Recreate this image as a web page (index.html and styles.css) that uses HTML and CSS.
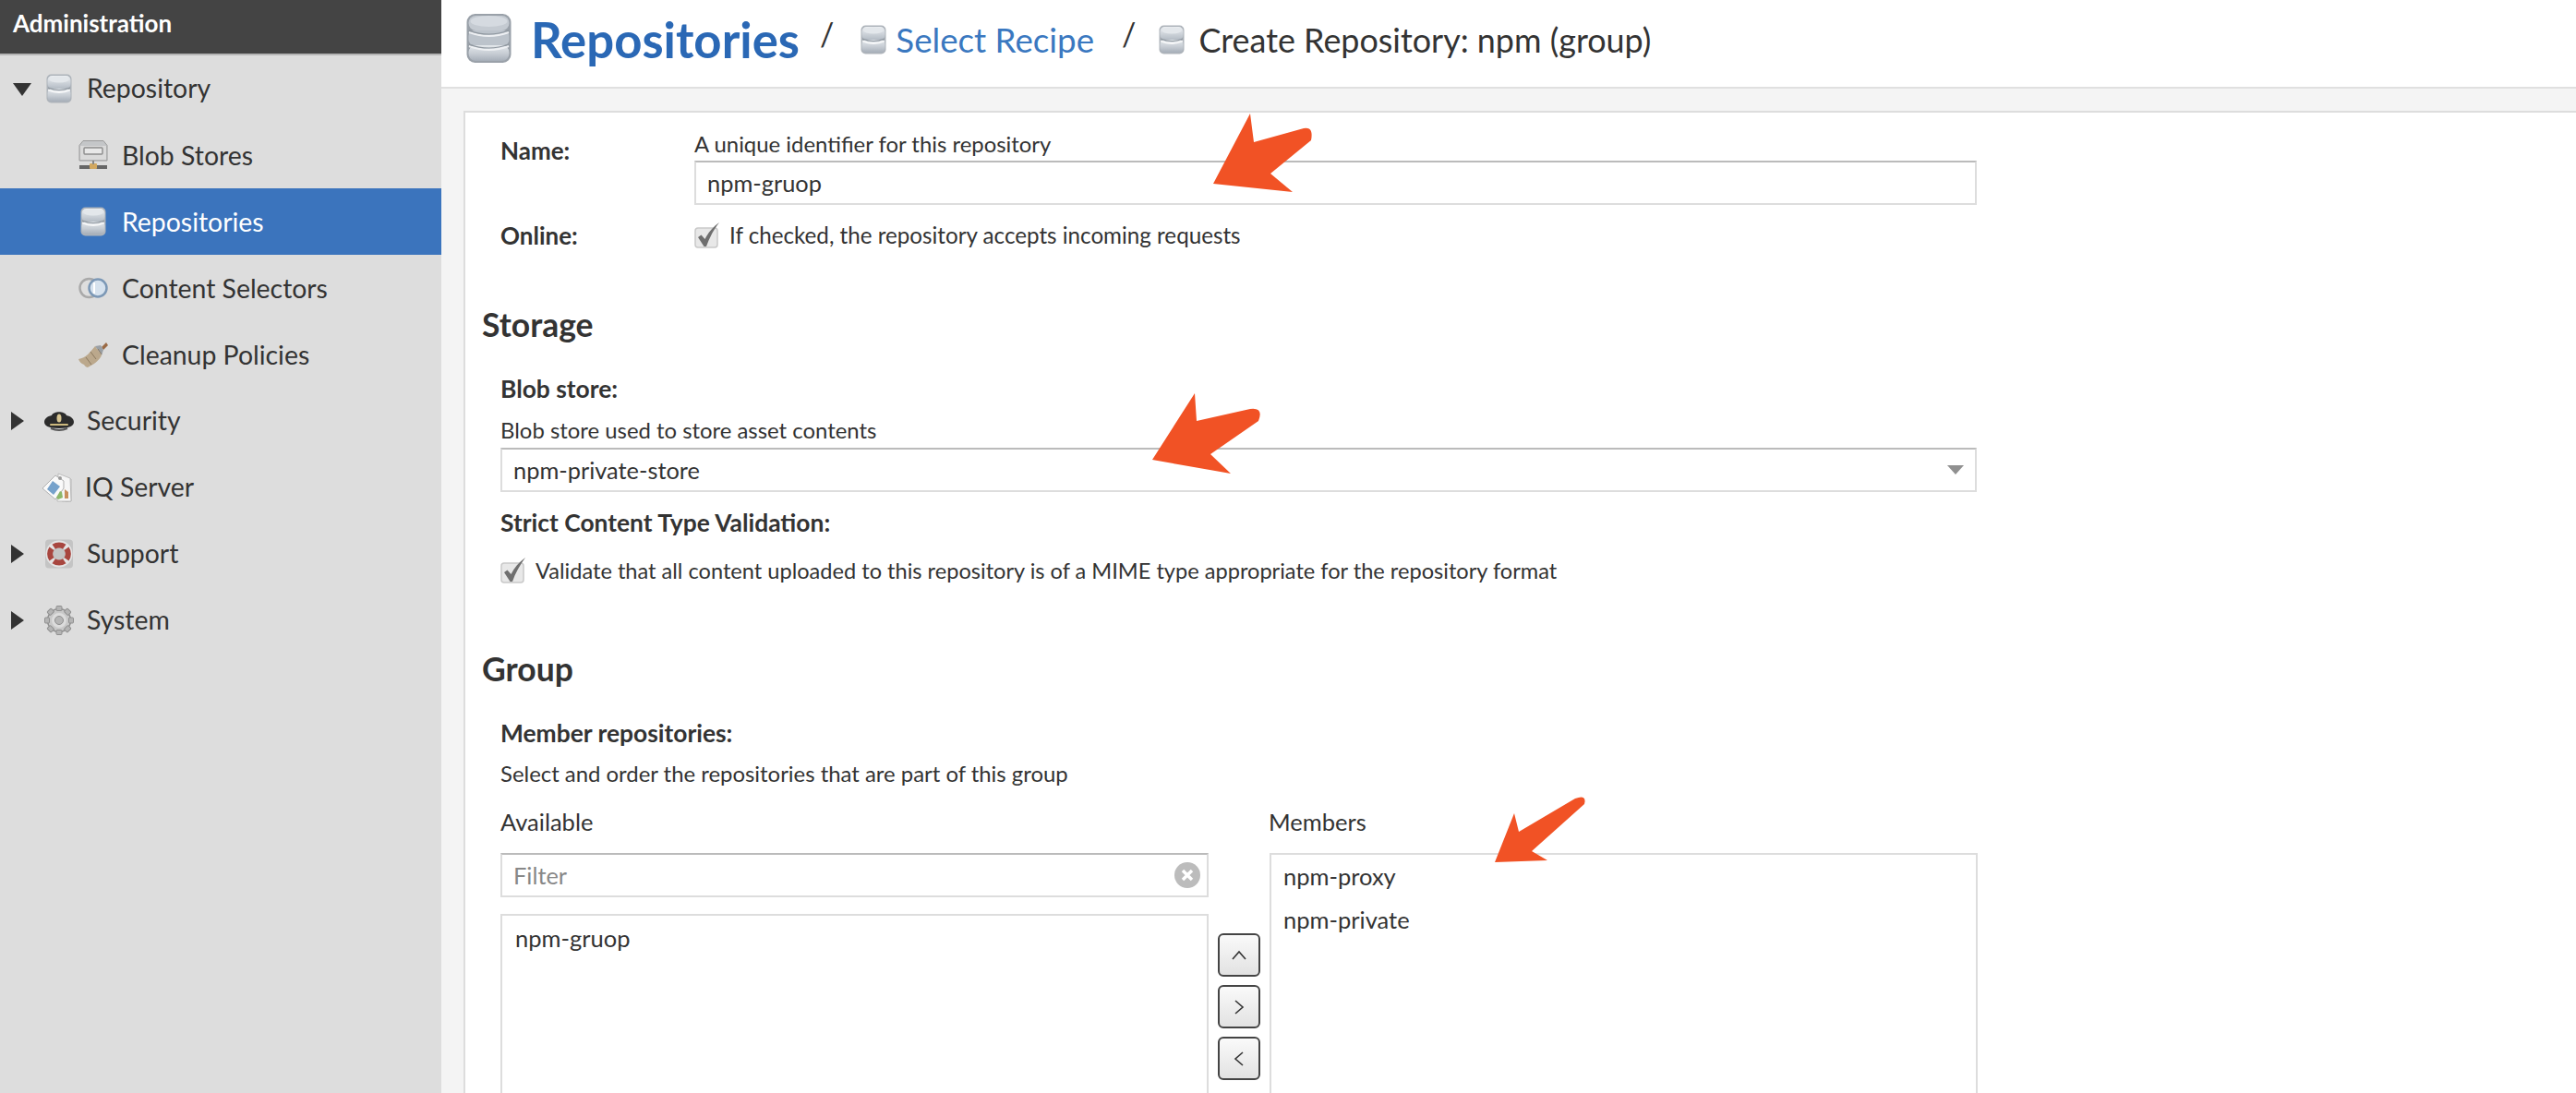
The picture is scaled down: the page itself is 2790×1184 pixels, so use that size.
FILE: index.html
```html
<!DOCTYPE html>
<html lang="en">
<head>
<meta charset="utf-8">
<title>Create Repository</title>
<link rel="stylesheet" href="styles.css">
</head>
<body>
<svg class="defs" width="0" height="0" aria-hidden="true">
  <defs>
    <linearGradient id="dbg" x1="0" y1="0" x2="0" y2="1"><stop offset="0" stop-color="#e4e8ec"/><stop offset="0.55" stop-color="#c6ccd3"/><stop offset="1" stop-color="#a6aeb8"/></linearGradient>
    <linearGradient id="dbl" x1="0" y1="0" x2="0" y2="1"><stop offset="0" stop-color="#eceff2"/><stop offset="1" stop-color="#b4bcc5"/></linearGradient>
    <symbol id="db2" viewBox="0 0 28 32">
      <rect x="0.5" y="0.5" width="27" height="31" rx="5" fill="#adb3ba"/>
      <rect x="1.5" y="2" width="25" height="14" rx="5" fill="url(#dbl)"/>
      <rect x="1.5" y="16" width="25" height="14" rx="5" fill="url(#dbg)"/>
      <ellipse cx="14" cy="6" rx="11" ry="3.4" fill="#e3e7eb"/>
      <path d="M2 17.500q12 5 24 0" fill="none" stroke="#f7f8f9" stroke-width="1.8"/>
      <path d="M2 15q12 5 24 0" fill="none" stroke="#8f979f" stroke-width="1.2"/>
    </symbol>
    <symbol id="db3" viewBox="0 0 49 56">
      <rect x="0.5" y="1" width="48" height="53" rx="9" fill="#9aa1a9"/>
      <rect x="2.5" y="3" width="44" height="16" rx="8" fill="#c4cad1"/>
      <rect x="2.5" y="19" width="44" height="16" rx="6" fill="#bcc3cb"/>
      <rect x="2.5" y="35" width="44" height="17" rx="8" fill="url(#dbg)"/>
      <ellipse cx="24.5" cy="9" rx="20" ry="6" fill="#d5dae0"/>
      <path d="M3 21q21.500 8 43 0M3 36q21.500 8 43 0" fill="none" stroke="#eef0f3" stroke-width="2"/>
      <path d="M3 19q21.500 8 43 0M3 34q21.500 8 43 0" fill="none" stroke="#8f979f" stroke-width="1.200"/>
    </symbol>
    <symbol id="blob" viewBox="0 0 32 32">
      <path d="M5 0.500h22l4 5v16.500h-30v-16.500z" fill="#c4c6c8" stroke="#999" stroke-width="1"/>
      <rect x="2" y="6" width="28" height="15" fill="#dadada"/>
      <rect x="6" y="8" width="20" height="7" rx="1" fill="#e8e8e8" stroke="#8c8c8c" stroke-width="1.400"/>
      <rect x="1" y="27" width="30" height="4" fill="#666"/>
      <rect x="12" y="25" width="8" height="6" rx="1" fill="#d2a860"/>
      <rect x="15" y="22" width="2" height="4" fill="#888"/>
    </symbol>
    <symbol id="sel" viewBox="0 0 32 24">
      <circle cx="11.500" cy="12" r="10" fill="#dedede" stroke="#a9a9a9" stroke-width="2.500"/>
      <circle cx="21" cy="12" r="9.500" fill="#d6e2ee" stroke="#7c98b6" stroke-width="2.500"/>
      <path d="M17 6v12" stroke="#fff" stroke-width="2"/>
    </symbol>
    <symbol id="broom" viewBox="0 0 32 30">
      <path d="M25 7l5-5 2 3-5 5z" fill="#9a6a45"/>
      <path d="M18 6l6-1 3 5-2 6z" fill="#9aa0a6"/>
      <path d="M18 6l7 10c-3 6-9 10-15 13-1 0-3-1-4-3-3-1-5-3-6-6 8-1 13-8 18-14z" fill="#bba88c"/>
      <path d="M13 12l6 8M8 18l6 8M21 9l4 6" stroke="#8c7a60" stroke-width="1"/>
    </symbol>
    <symbol id="sec" viewBox="0 0 32 24">
      <path d="M8 6C10 1 22 1 24 6c5 1 8 4 8 7 0 4-4 7-16 7S0 17 0 13c0-3 3-6 8-7z" fill="#2c2c2c"/>
      <ellipse cx="16" cy="9" rx="2.500" ry="4.500" fill="#d8c692"/>
      <rect x="6" y="15" width="20" height="2" rx="1" fill="#cdb97e"/>
      <path d="M7 20q9 4 18 0" fill="none" stroke="#555" stroke-width="2"/>
    </symbol>
    <symbol id="iq" viewBox="0 0 32 32">
      <path d="M21 5l10 2v24l-9 1z" fill="#efefef" stroke="#b5b5b5"/>
      <path d="M17 1l13 5 1 25H16z" fill="#f6f6f6" stroke="#bdbdbd"/>
      <path d="M24 18l4 3v7h-4z" fill="#c98f5c"/>
      <path d="M14 3l9 6v8l-9 12L0 17z" fill="#fafafa" stroke="#b0b0b0"/>
      <path d="M11 9l8 6-7 9-7-6z" fill="#76a2cb"/>
      <path d="M15 27l4-7 2 1 1 6-5 2z" fill="#8db86a"/>
      <circle cx="19" cy="6" r="2" fill="#9a9a9a"/>
    </symbol>
    <symbol id="sup" viewBox="0 0 31 32">
      <rect x="0.500" y="0.500" width="30" height="31" rx="4" fill="#c4c4c4"/>
      <circle cx="15.500" cy="16" r="11" fill="none" stroke="#e4e4e4" stroke-width="7"/>
      <path d="M8 5.800a13 13 0 0 1 15 0l-3.500 5a7 7 0 0 0-8 0zM8 26.200a13 13 0 0 0 15 0l-3.500-5a7 7 0 0 1-8 0zM5 8.500a13 13 0 0 0 0 15l5-3.500a7 7 0 0 1 0-8zM26 8.500a13 13 0 0 1 0 15l-5-3.500a7 7 0 0 0 0-8z" fill="#a8463f"/>
    </symbol>
    <symbol id="gear" viewBox="0 0 32 32">
      <circle cx="16" cy="16" r="12.500" fill="#c8c8c8" stroke="#8f8f8f" stroke-width="1.500"/>
      <g fill="#b4b4b4" stroke="#8f8f8f" stroke-width="1">
        <rect x="13" y="0.500" width="6" height="5" rx="1"/>
        <rect x="13" y="26.500" width="6" height="5" rx="1"/>
        <rect x="0.500" y="13" width="5" height="6" rx="1"/>
        <rect x="26.500" y="13" width="5" height="6" rx="1"/>
        <rect x="13" y="0.500" width="6" height="5" rx="1" transform="rotate(45 16 16)"/>
        <rect x="13" y="26.500" width="6" height="5" rx="1" transform="rotate(45 16 16)"/>
        <rect x="0.500" y="13" width="5" height="6" rx="1" transform="rotate(45 16 16)"/>
        <rect x="26.500" y="13" width="5" height="6" rx="1" transform="rotate(45 16 16)"/>
      </g>
      <circle cx="16" cy="16" r="8" fill="#dcdcdc"/>
      <circle cx="16" cy="16" r="4.500" fill="#b5b5b5" stroke="#8f8f8f"/>
    </symbol>
    <symbol id="check" viewBox="0 0 28 28">
      <rect x="1" y="6" width="24" height="21" rx="3" fill="#e8e8e8" stroke="#c9c9c9" stroke-width="1.500"/>
      <path d="M4 16L7.500 13.500 11.500 18C15 11 20 5 27 0 21 8 16 17 13 26H10.500Z" fill="#6f6f6f"/>
    </symbol>
  </defs>
</svg>
<div class="app">
  <nav class="side">
    <div class="side-head">Administration</div>
    <div class="row"><svg class="tw tw-down" viewBox="0 0 20 14"><path d="M0 0h20L10 14z"/></svg><svg class="ico"><use href="#db2"/></svg><span>Repository</span></div>
    <div class="row child"><svg class="ico"><use href="#blob"/></svg><span>Blob Stores</span></div>
    <div class="row child active"><svg class="ico"><use href="#db2"/></svg><span>Repositories</span></div>
    <div class="row child"><svg class="ico"><use href="#sel"/></svg><span>Content Selectors</span></div>
    <div class="row child"><svg class="ico"><use href="#broom"/></svg><span>Cleanup Policies</span></div>
    <div class="row"><svg class="tw tw-right" viewBox="0 0 14 20"><path d="M0 0l14 10L0 20z"/></svg><svg class="ico"><use href="#sec"/></svg><span>Security</span></div>
    <div class="row leaf"><svg class="ico"><use href="#iq"/></svg><span>IQ Server</span></div>
    <div class="row"><svg class="tw tw-right" viewBox="0 0 14 20"><path d="M0 0l14 10L0 20z"/></svg><svg class="ico"><use href="#sup"/></svg><span>Support</span></div>
    <div class="row"><svg class="tw tw-right" viewBox="0 0 14 20"><path d="M0 0l14 10L0 20z"/></svg><svg class="ico"><use href="#gear"/></svg><span>System</span></div>
  </nav>
  <main class="main">
    <header class="bar">
      <svg class="bar-ico"><use href="#db3"/></svg>
      <h1 class="title">Repositories</h1>
      <span class="slash">/</span>
      <svg class="crumb-ico"><use href="#db2"/></svg>
      <a class="crumb link">Select Recipe</a>
      <span class="slash slash2">/</span>
      <svg class="crumb-ico crumb-ico2"><use href="#db2"/></svg>
      <span class="crumb current">Create Repository: npm (group)</span>
    </header>
    <div class="body">
      <section class="card">
        <div class="name-row">
          <label class="strong name-label">Name:</label>
          <div class="name-field">
            <div class="hint">A unique identifier for this repository</div>
            <input class="field" type="text" value="npm-gruop">
          </div>
        </div>
        <div class="online-row">
          <label class="strong name-label">Online:</label>
          <svg class="cb"><use href="#check"/></svg>
          <span class="hint online-hint">If checked, the repository accepts incoming requests</span>
        </div>
        <h2 class="section storage">Storage</h2>
        <div class="block">
          <div class="strong blob-label">Blob store:</div>
          <div class="hint blob-hint">Blob store used to store asset contents</div>
          <div class="field select"><span>npm-private-store</span><svg class="caret" viewBox="0 0 18 10"><path d="M0 0h18L9 10z"/></svg></div>
          <div class="strong strict">Strict Content Type Validation:</div>
          <div class="validate-row">
            <svg class="cb"><use href="#check"/></svg>
            <span class="hint validate-hint">Validate that all content uploaded to this repository is of a MIME type appropriate for the repository format</span>
          </div>
        </div>
        <h2 class="section group">Group</h2>
        <div class="block">
          <div class="strong member-label">Member repositories:</div>
          <div class="hint member-hint">Select and order the repositories that are part of this group</div>
          <div class="picker">
            <div class="col">
              <div class="hint col-label">Available</div>
              <div class="filter-wrap">
                <input class="field filter" type="text" placeholder="Filter">
                <svg class="clear" viewBox="0 0 28 28"><circle cx="14" cy="14" r="14" fill="#bcbcbc"/><path d="M9 9l10 10M19 9L9 19" stroke="#fff" stroke-width="3.500"/></svg>
              </div>
              <div class="list avail"><div class="opt">npm-gruop</div></div>
            </div>
            <div class="btns">
              <button class="btn"><svg viewBox="0 0 16 16"><path d="M1 12L8 4l7 8"/></svg></button>
              <button class="btn"><svg viewBox="0 0 16 16"><path d="M4 1l8 7-8 7"/></svg></button>
              <button class="btn"><svg viewBox="0 0 16 16"><path d="M12 1L4 8l8 7"/></svg></button>
            </div>
            <div class="col">
              <div class="hint col-label members-label">Members</div>
              <div class="list members"><div class="opt">npm-proxy</div><div class="opt">npm-private</div></div>
            </div>
          </div>
        </div>
      </section>
    </div>
  </main>
</div>
<svg class="annot" viewBox="0 0 2790 1184" aria-hidden="true">
  <path d="M1354 123L1358 154 1412 139Q1423 137 1420 152L1376 188 1400 208 1314 199Z"/>
  <path d="M1294 426L1296 456 1354 443Q1369 441 1363 456L1311 492 1333 513 1248 498Z"/>
  <path d="M1640 881L1645 901 1706 865Q1719 860 1716 871L1659 922 1676 932 1619 934Z"/>
</svg>
</body>
</html>
```

FILE: styles.css
```css
* { box-sizing: border-box; }
html, body { margin: 0; height: 1184px; overflow: hidden; }
body { font-family: Lato, "Open Sans", sans-serif; color: #333; background: #fff; position: relative; }
.defs { position: absolute; }
.app { display: flex; height: 1184px; }

.side { width: 478px; flex: none; background: #ddd; color: #333; }
.side-head { height: 60px; background: #444; border-bottom: 2px solid #b5b5b5; color: #fff; font-size: 26px; font-weight: 700; line-height: 50px; padding-left: 14px; }
.row { display: flex; align-items: center; height: 72px; padding-left: 48px; font-size: 28.4px; position: relative; }
.row span { margin-top: -3px; margin-left: 14px; }
.row.child { padding-left: 85px; }
.row.child span { margin-top: -1px; margin-left: 15px; }
.row.leaf { padding-left: 46px; }
.row.active { background: #3b74bd; color: #fff; }
.ico { width: 32px; height: 32px; flex: none; }
.tw { position: absolute; fill: #333; }
.tw-down { left: 14px; top: 30px; width: 20px; height: 14px; }
.tw-right { left: 12px; top: 26px; width: 14px; height: 20px; }

.main { flex: 1; min-width: 0; display: flex; flex-direction: column; background: #f4f4f4; }
.bar { height: 96px; flex: none; background: #fff; border-bottom: 2px solid #e0e0e0; display: flex; align-items: center; padding-left: 27px; }
.bar-ico { width: 49px; height: 56px; margin-right: 21px; margin-top: -10px; }
.title { margin: -10px 0 0; font-size: 52.700px; font-weight: 700; color: #2a68b5; }
.slash { font-size: 34px; margin: -22px 0 0 22px; color: #333; }
.slash2 { margin-left: 30px; }
.crumb-ico { width: 28px; height: 32px; margin: -8px 10px 0 29px; flex: none; }
.crumb-ico2 { margin-left: 25px; margin-right: 15px; }
.crumb { font-size: 36.700px; margin-top: -8px; }
.current { font-size: 35.900px; }
.link { color: #3a78c0; }

.body { flex: 1; min-height: 0; padding: 24px 0 0 24px; }
.card { height: 100%; background: #fff; border: solid #ddd; border-width: 2px 0 0 2px; padding: 19px 0 0 18px; overflow: hidden; }
.hint { font-size: 23.9px; line-height: 30px; }
.online-hint { font-size: 24.2px; }
.validate-hint { font-size: 23.6px; }
.strong { font-size: 26.4px; line-height: 30px; font-weight: 700; }
.name-row { display: flex; padding-left: 20px; }
.name-label { width: 210px; flex: none; font-size: 26px; }
.name-row .name-label { margin-top: 7px; }
.name-field { width: 1389px; }
.field { display: block; width: 100%; height: 48px; border: 2px solid #ddd; border-top-color: #bbb; background: #fff; padding: 0 12px; font: 25.400px Lato, "Open Sans", sans-serif; color: #333; outline: none; border-radius: 0; margin-top: 3px; }
.filter::placeholder { color: #888; opacity: 1; }
.online-row { display: flex; align-items: center; height: 36px; margin-top: 15px; padding-left: 20px; }
.cb { width: 28px; height: 28px; flex: none; margin-right: 10px; }
.section { margin: 0; font-size: 35.500px; line-height: 40px; font-weight: 700; }
.storage { margin-top: 59px; }
.group { margin-top: 69px; }
.block { padding-left: 20px; width: 1620px; }
.blob-label { margin-top: 34px; }
.blob-hint { margin-top: 15px; }
.select { width: 1599px; margin-top: 4px; display: flex; align-items: center; justify-content: space-between; padding-right: 12px; }
.caret { width: 18px; height: 10px; fill: #909090; }
.strict { margin-top: 18px; }
.validate-row { display: flex; align-items: center; height: 36px; margin-top: 19px; }
.member-label { margin-top: 34px; }
.member-hint { margin-top: 14px; }
.picker { display: grid; grid-template-columns: 767px 66px 767px; margin-top: 22px; }
.col-label { margin-bottom: 19px; font-size: 25.500px; }
.members-label { margin-left: -1px; }
.filter-wrap { position: relative; }
.filter { margin: 0; }
.clear { position: absolute; right: 9px; top: 10px; width: 28px; height: 28px; }
.list { border: 2px solid #ddd; border-bottom: 0; background: #fff; padding: 9px 14px; height: 400px; }
.avail { margin-top: 18px; }
.members { padding: 8px 13px; }
.opt { font-size: 25.500px; line-height: 30px; height: 47px; }
.btns { display: flex; flex-direction: column; gap: 9px; padding: 136px 0 0 10px; }
.btn { width: 46px; height: 47px; flex: none; padding: 0; border: 2px solid #444; border-radius: 6px; background: linear-gradient(#fafafa, #e2e2e2); display: flex; align-items: center; justify-content: center; }
.btn svg { width: 16px; height: 16px; fill: none; stroke: #333; stroke-width: 1.600; }
.annot { position: absolute; left: 0; top: 0; width: 2790px; height: 1184px; fill: #f15225; pointer-events: none; }
```
